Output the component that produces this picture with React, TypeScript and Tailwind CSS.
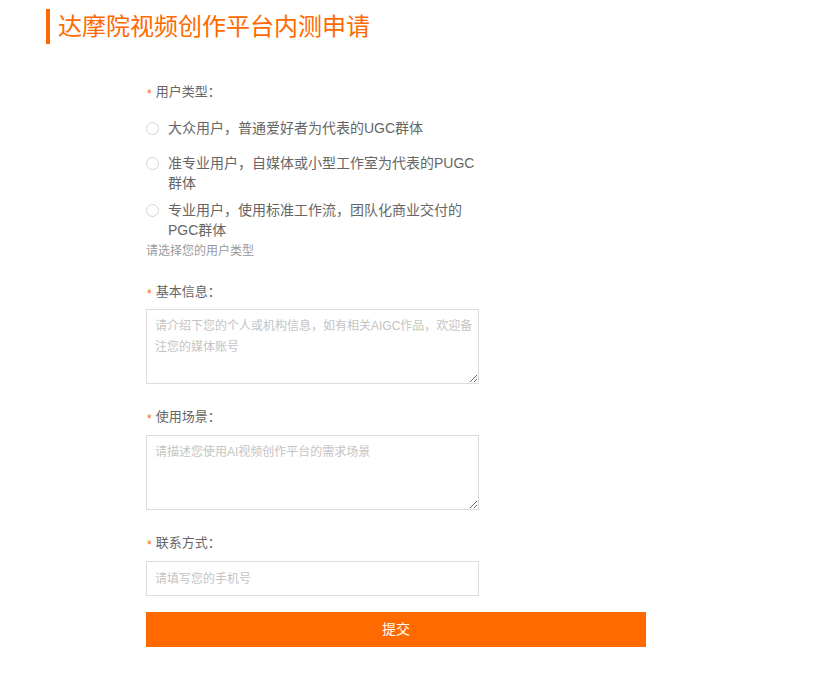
import { useState } from 'react';

const FONT = '"Liberation Sans", "Noto Sans CJK SC", Arial, sans-serif';

const userTypes = [
  { value: 'ugc', label: '大众用户，普通爱好者为代表的UGC群体', gap: 'mt-0' },
  { value: 'pugc', label: '准专业用户，自媒体或小型工作室为代表的PUGC群体', gap: 'mt-[15px]' },
  { value: 'pgc', label: '专业用户，使用标准工作流，团队化商业交付的PGC群体', gap: 'mt-[7px]' },
];

function Label({ text, className }: { text: string; className?: string }) {
  return (
    <div className={`flex items-center h-5 text-[13px] leading-5 text-[#666] ${className ?? ''}`}>
      <span className="text-[#ff6a00] text-[12px] mr-[4px] pl-[1px] mt-[3px]">*</span>
      <span>{text}：</span>
    </div>
  );
}

export default function App() {
  const [userType, setUserType] = useState('');

  return (
    <div className="min-h-screen bg-white pt-[9px] pl-[46px]" style={{ fontFamily: FONT }}>
      <div className="flex items-center h-[35px] border-l-4 border-[#ff6a00] pl-2">
        <h1 className="text-[24px] leading-[35px] text-[#ff6a00]">达摩院视频创作平台内测申请</h1>
      </div>

      <form className="ml-[100px] mt-[38px] w-[500px]" onSubmit={(e) => e.preventDefault()}>
        <Label text="用户类型" />

        <div className="mt-4 w-[333px]">
          {userTypes.map((t) => (
            <label key={t.value} className={`flex items-start cursor-pointer ${t.gap}`}>
              <span className="flex items-center h-5 shrink-0">
                <span
                  className={`w-[13px] h-[13px] rounded-full border ${
                    userType === t.value ? 'border-[#ff6a00] border-4' : 'border-[#d4d4d4]'
                  }`}
                />
              </span>
              <input
                type="radio"
                name="userType"
                value={t.value}
                className="hidden"
                checked={userType === t.value}
                onChange={() => setUserType(t.value)}
              />
              <span className="ml-[9px] text-[14px] leading-5 text-[#666]">{t.label}</span>
            </label>
          ))}
        </div>
        <p className="mt-[3px] text-[12px] leading-4 text-[#999]">请选择您的用户类型</p>

        <Label text="基本信息" className="mt-[23px]" />
        <textarea
          className="mt-[7px] block w-[333px] h-[75px] border border-[#dcdcdc] pl-2 pr-1 pt-[6px] text-[12px] leading-[21px] text-[#666] placeholder:text-[#c4c4c4] outline-none"
          placeholder="请介绍下您的个人或机构信息，如有相关AIGC作品，欢迎备注您的媒体账号"
        />

        <Label text="使用场景" className="mt-[23px]" />
        <textarea
          className="mt-2 block w-[333px] h-[75px] border border-[#dcdcdc] pl-2 pr-1 pt-[6px] text-[12px] leading-[21px] text-[#666] placeholder:text-[#c4c4c4] outline-none"
          placeholder="请描述您使用AI视频创作平台的需求场景"
        />

        <Label text="联系方式" className="mt-[23px]" />
        <input
          type="text"
          className="mt-2 block w-[333px] h-[35px] border border-[#dcdcdc] px-2 text-[12px] text-[#666] placeholder:text-[#c4c4c4] outline-none"
          placeholder="请填写您的手机号"
        />

        <button
          type="submit"
          className="mt-4 block w-[500px] h-[35px] bg-[#ff6a00] text-white text-[14px]"
        >
          提交
        </button>
      </form>
    </div>
  );
}
